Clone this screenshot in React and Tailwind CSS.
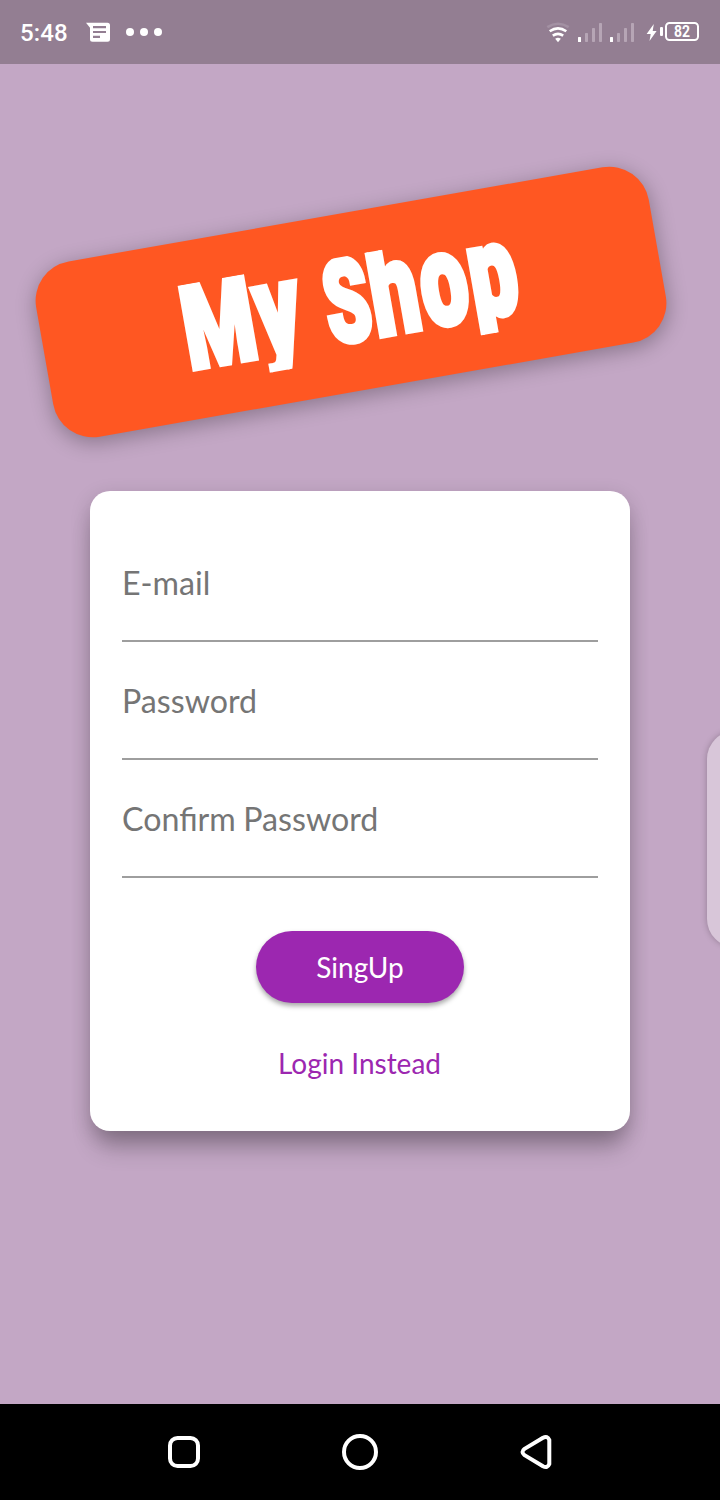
import React from "react";

function StatusBar() {
  return (
    <header className="flex h-16 shrink-0 items-center justify-between bg-[#937e92] pl-5 pr-5 text-white">
      <div className="flex items-center">
        <span className="w-[66px] pt-px text-[24px] font-medium leading-8 tracking-[0.1px]">5:48</span>
        <svg width="24" height="20" viewBox="0 0 24 20">
          <path fillRule="evenodd" fill="#fff" d="M0 .7H21.5Q24 .7 24 3.200V17.200Q24 19.700 21.5 19.700H6.500Q4 19.700 4 17.200V5.700ZM7 4V6.200H20V4ZM7 8.900V11.100H20V8.900ZM7 13.700V15.900H14V13.700Z" />
        </svg>
        <div className="ml-4 flex gap-1.5">
          <i className="size-2 rounded-full bg-white" />
          <i className="size-2 rounded-full bg-white" />
          <i className="size-2 rounded-full bg-white" />
        </div>
      </div>
      <svg width="154" height="24" viewBox="546 20 154 24">
        <g fill="none" strokeWidth="2.600">
          <path d="M547.300 27.200Q558 20.300 568.700 27.200" stroke="#a391a3" />
          <path d="M549.700 31.200Q558 25.500 566.300 31.200" stroke="#fff" />
          <path d="M552.800 35.600Q558 32 563.200 35.600" stroke="#fff" />
        </g>
        <path d="M555.200 38.800Q558 36.800 560.800 38.800L558 42.200Z" fill="#fff" />
        <g fill="#b6a5b5">
          <rect x="585" y="33" width="3" height="9" rx=".7" /><rect x="592" y="28" width="3" height="14" rx=".7" /><rect x="599" y="23" width="3" height="19" rx=".7" />
          <rect x="617" y="33" width="3" height="9" rx=".7" /><rect x="624" y="28" width="3" height="14" rx=".7" /><rect x="631" y="23" width="3" height="19" rx=".7" />
        </g>
        <g fill="#fff">
          <rect x="578" y="37" width="3" height="5" rx=".5" /><rect x="610" y="37" width="3" height="5" rx=".5" />
          <path d="M653.800 24L646.600 34H650.700L649.500 41L656.600 31H652.700Z" />
          <rect x="660" y="27" width="3" height="9" rx="1" />
        </g>
        <rect x="666" y="23" width="32" height="17" rx="3.500" fill="none" stroke="#fff" strokeWidth="2" />
        <text x="674" y="37" fill="#fff" fontSize="16" fontWeight="700" textLength="16" lengthAdjust="spacingAndGlyphs">82</text>
      </svg>
    </header>
  );
}

function Banner() {
  return (
    <div className="ml-[39.5px] mt-[149px] h-[178px] w-[622px] shrink-0 -rotate-10 rounded-[40px] bg-[#ff5722] shadow-[0_5px_20px_1px_rgba(0,0,0,0.28)]">
      <svg width="622" height="178" viewBox="0 0 622 178">
        <clipPath id="wordmark">
          <rect x="100" y="43" width="420" height="101.500" />
        </clipPath>
        <g clipPath="url(#wordmark)">
          <text transform="translate(0 127.500) scale(.55 1)" y="0" fill="#fff" stroke="#fff" strokeWidth="6" fontFamily="Roboto, sans-serif" fontWeight="900" fontSize="115">
            <tspan x="256" textLength="131" lengthAdjust="spacingAndGlyphs">M</tspan>
            <tspan x="391" fontSize="129" textLength="80" lengthAdjust="spacingAndGlyphs">y</tspan>
            <tspan x="480" textLength="30"> </tspan>
            <tspan x="517" textLength="82" lengthAdjust="spacingAndGlyphs">S</tspan>
            <tspan x="602" fontSize="129" textLength="87" lengthAdjust="spacingAndGlyphs">h</tspan>
            <tspan x="694" fontSize="129" textLength="86" lengthAdjust="spacingAndGlyphs">o</tspan>
            <tspan x="784" fontSize="129" textLength="87" lengthAdjust="spacingAndGlyphs">p</tspan>
          </text>
        </g>
      </svg>
    </div>
  );
}

function Field({ label }) {
  return (
    <div className="h-[118px] border-b-2 border-[#9e9e9e] pt-[38px] text-[32.2px] leading-[42px] text-[#757575] [word-spacing:-0.7px]">{label}</div>
  );
}

export default function App() {
  return (
    <div className="relative flex h-[1500px] w-[720px] flex-col overflow-hidden bg-[#c3a7c5] font-['Roboto',sans-serif]">
      <StatusBar />
      <Banner />
      <main className="mx-auto mt-[100px] flex h-[640px] w-[540px] shrink-0 flex-col rounded-[20px] bg-white px-8 pt-[33px] font-['Lato',sans-serif] shadow-[0_22px_24px_-6px_rgba(0,0,0,0.24),0_6px_20px_0_rgba(0,0,0,0.18)]">
        <Field label="E-mail" />
        <Field label="Password" />
        <Field label="Confirm Password" />
        <button className="mx-auto mt-[53px] h-[72px] w-[208px] shrink-0 rounded-full bg-[#9c27b0] text-[28px] text-white shadow-[0_3px_5px_rgba(0,0,0,0.35)]">SingUp</button>
        <button className="mx-auto mt-10 h-10 pr-px text-[28px] leading-10 text-[#9c27b0]">Login Instead</button>
      </main>
      <div className="absolute left-[707px] top-[731px] h-[216px] w-14 rounded-[28px] bg-[#d8c6d9] shadow-[0_0_6px_rgba(0,0,0,0.25)]" />
      <nav className="mt-auto flex h-24 shrink-0 items-center bg-black pl-[166px]">
        <svg width="390" height="40" viewBox="166 1432 390 40" fill="none" stroke="#fff" strokeWidth="4" strokeLinejoin="round">
          <rect x="170" y="1438" width="28" height="28" rx="7.500" />
          <circle cx="360" cy="1452" r="16" />
          <path d="M543 1437.800L524.500 1448.900Q520.500 1452 524.500 1455.100L543 1466.200Q547.500 1468.500 549.300 1464V1440Q547.500 1435.500 543 1437.800Z" />
        </svg>
      </nav>
    </div>
  );
}
